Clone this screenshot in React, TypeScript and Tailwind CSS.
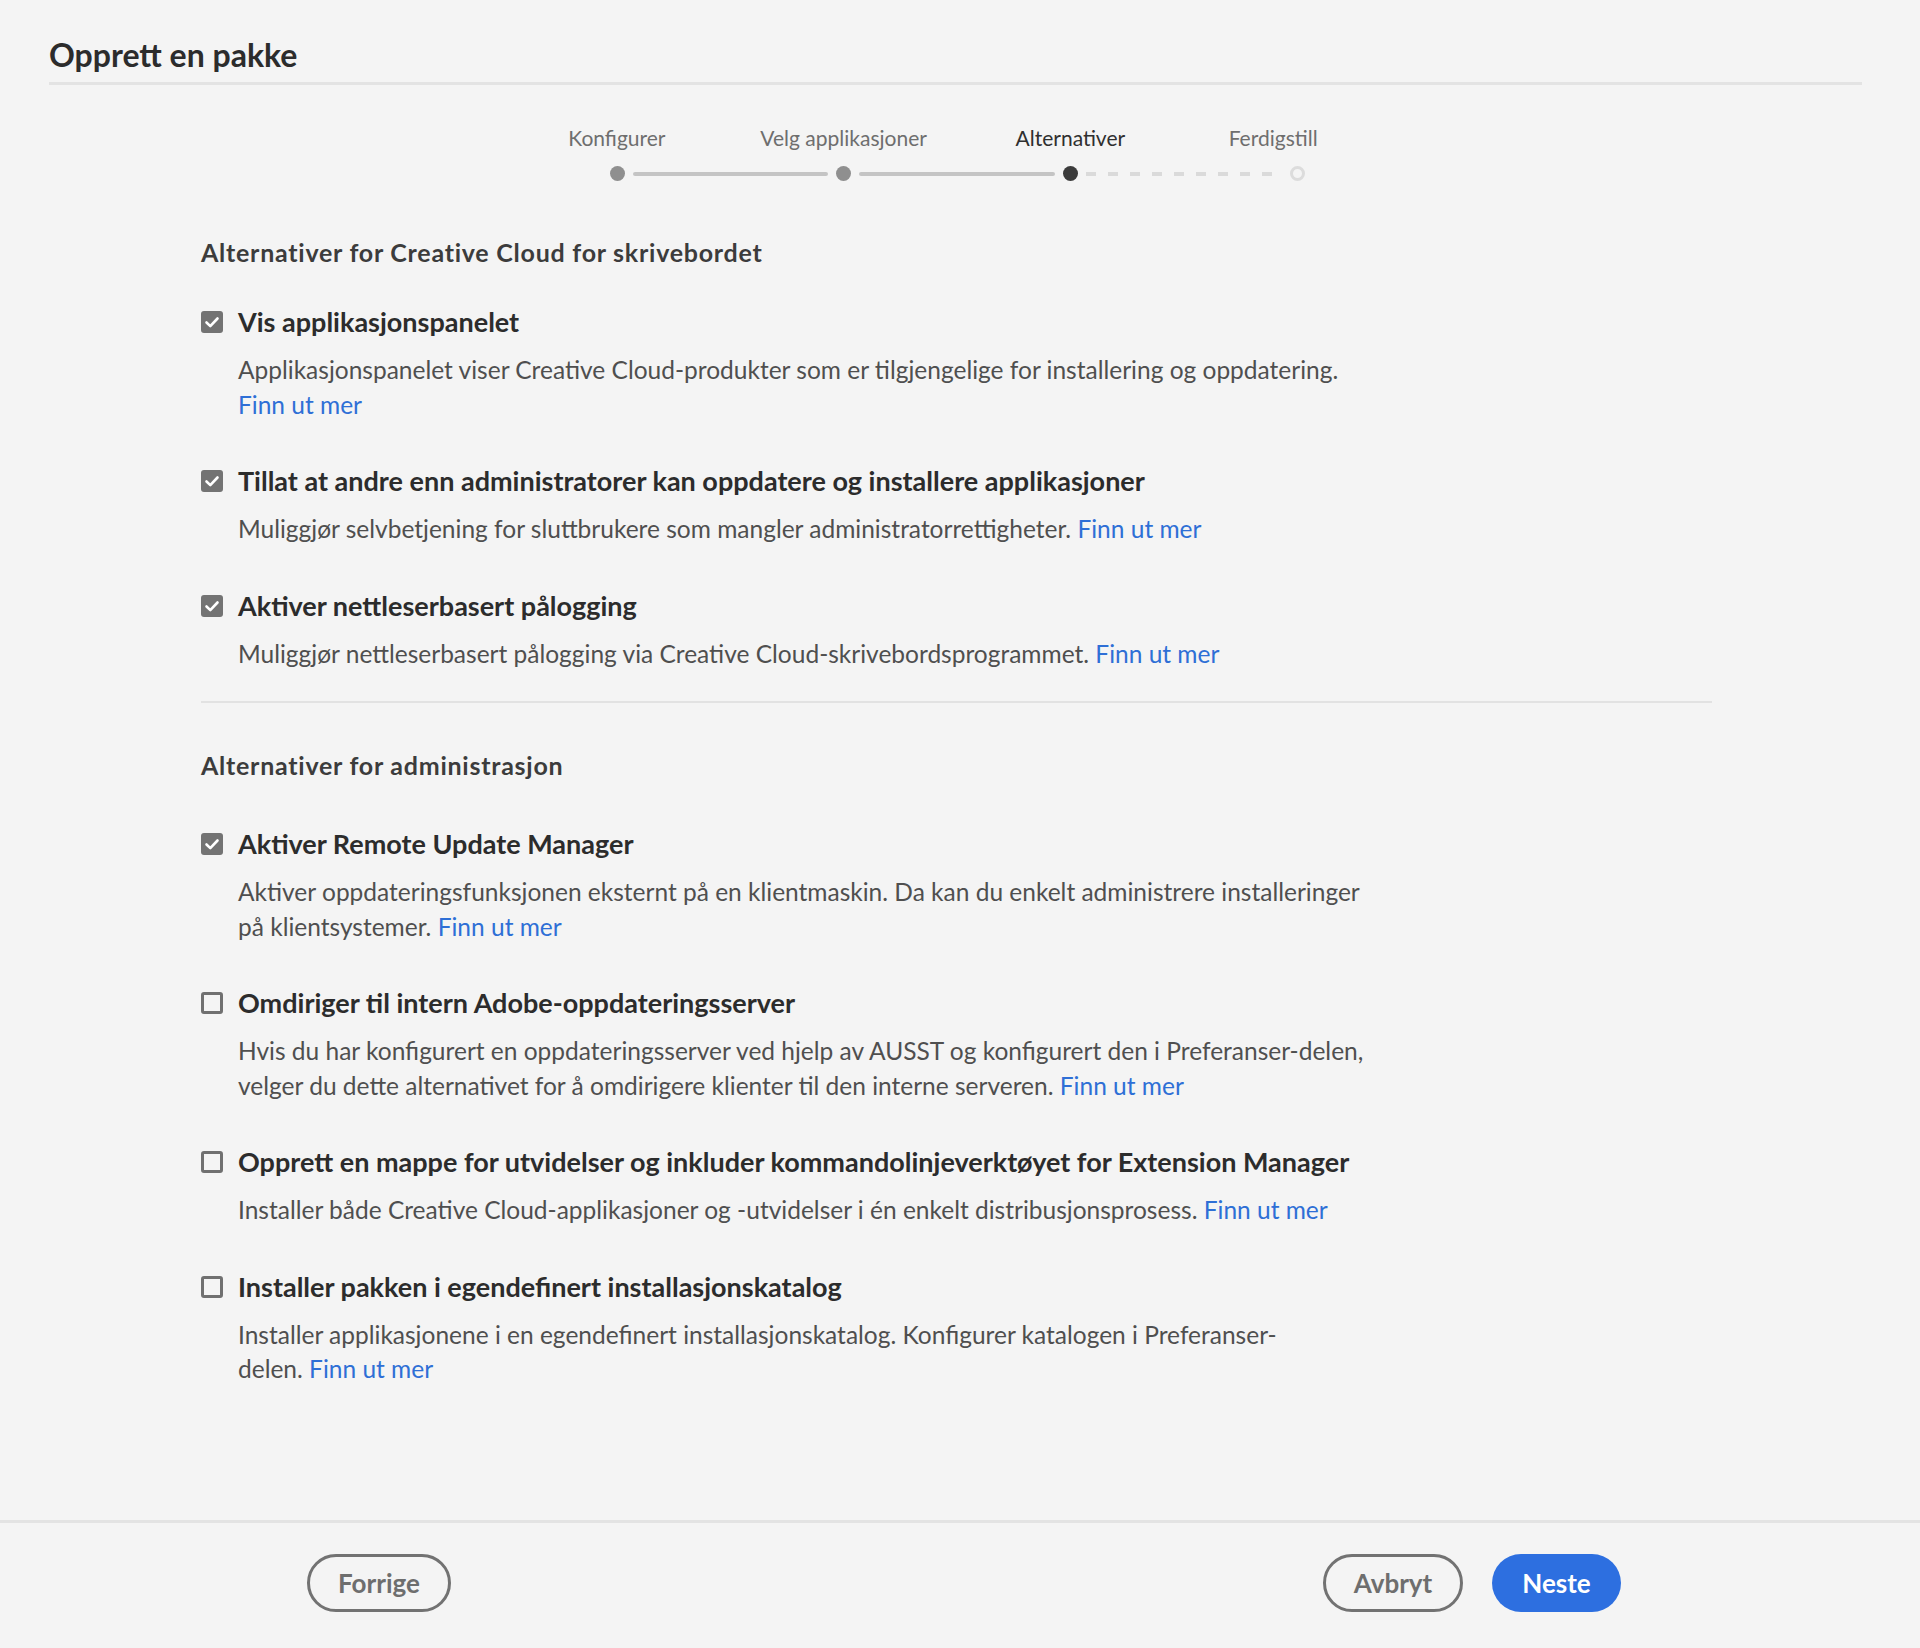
import type { ReactNode } from "react";

const LINK = "text-[#2e6fd6]";

type Opt = {
  checked: boolean;
  label: string;
  lines: ReactNode[];
};

const desktopOpts: Opt[] = [
  {
    checked: true,
    label: "Vis applikasjonspanelet",
    lines: [
      "Applikasjonspanelet viser Creative Cloud-produkter som er tilgjengelige for installering og oppdatering.",
      <span className={LINK}>Finn ut mer</span>,
    ],
  },
  {
    checked: true,
    label: "Tillat at andre enn administratorer kan oppdatere og installere applikasjoner",
    lines: [
      <>
        Muliggjør selvbetjening for sluttbrukere som mangler administratorrettigheter.{" "}
        <span className={LINK}>Finn ut mer</span>
      </>,
    ],
  },
  {
    checked: true,
    label: "Aktiver nettleserbasert pålogging",
    lines: [
      <>
        Muliggjør nettleserbasert pålogging via Creative Cloud-skrivebordsprogrammet.{" "}
        <span className={LINK}>Finn ut mer</span>
      </>,
    ],
  },
];

const adminOpts: Opt[] = [
  {
    checked: true,
    label: "Aktiver Remote Update Manager",
    lines: [
      "Aktiver oppdateringsfunksjonen eksternt på en klientmaskin. Da kan du enkelt administrere installeringer",
      <>
        på klientsystemer. <span className={LINK}>Finn ut mer</span>
      </>,
    ],
  },
  {
    checked: false,
    label: "Omdiriger til intern Adobe-oppdateringsserver",
    lines: [
      "Hvis du har konfigurert en oppdateringsserver ved hjelp av AUSST og konfigurert den i Preferanser-delen,",
      <>
        velger du dette alternativet for å omdirigere klienter til den interne serveren.{" "}
        <span className={LINK}>Finn ut mer</span>
      </>,
    ],
  },
  {
    checked: false,
    label: "Opprett en mappe for utvidelser og inkluder kommandolinjeverktøyet for Extension Manager",
    lines: [
      <>
        Installer både Creative Cloud-applikasjoner og -utvidelser i én enkelt distribusjonsprosess.{" "}
        <span className={LINK}>Finn ut mer</span>
      </>,
    ],
  },
  {
    checked: false,
    label: "Installer pakken i egendefinert installasjonskatalog",
    lines: [
      "Installer applikasjonene i en egendefinert installasjonskatalog. Konfigurer katalogen i Preferanser-",
      <>
        delen. <span className={LINK}>Finn ut mer</span>
      </>,
    ],
  },
];

function Checkbox({ checked }: { checked: boolean }) {
  if (!checked) {
    return <span className="mt-[6px] block h-[22px] w-[22px] shrink-0 rounded-[3px] border-[3px] border-[#707070]" />;
  }
  return (
    <span className="mt-[6px] flex h-[22px] w-[22px] shrink-0 items-center justify-center rounded-[3px] bg-[#737373]">
      <svg viewBox="0 0 22 22" className="h-[22px] w-[22px]" fill="none">
        <path d="M5.5 11.5l3.8 3.6L16.5 7.5" stroke="#fff" strokeWidth="2.6" strokeLinecap="round" strokeLinejoin="round" />
      </svg>
    </span>
  );
}

function Option({ opt, first }: { opt: Opt; first?: boolean }) {
  return (
    <div className={`flex gap-[15px] ${first ? "" : "mt-[42px]"}`}>
      <Checkbox checked={opt.checked} />
      <div>
        <div className="whitespace-nowrap text-[27px] font-bold leading-[34px] text-[#2c2c2c]">{opt.label}</div>
        <div className="mt-[14px] text-[24.5px] leading-[34.5px] text-[#4f4f4f]">
          {opt.lines.map((l, i) => (
            <div key={i} className="whitespace-nowrap">
              {l}
            </div>
          ))}
        </div>
      </div>
    </div>
  );
}

const STEPS = ["Konfigurer", "Velg applikasjoner", "Alternativer", "Ferdigstill"];

function Stepper() {
  return (
    <div className="mt-[38px] pl-[3px]">
      <div className="mx-auto w-[907px]">
        <div className="grid grid-cols-4 text-center text-[21px] leading-[30px]">
          {STEPS.map((s, i) => (
            <span
              key={s}
              className={i === 2 ? "text-[#2f2f2f]" : i === 3 ? "-translate-x-[24px] text-[#6e6e6e]" : "text-[#6e6e6e]"}
            >
              {s}
            </span>
          ))}
        </div>
        <div className="mx-auto mt-[13px] flex w-[695px] items-center">
          <span className="h-[15px] w-[15px] shrink-0 rounded-full bg-[#8f8f8f]" />
          <span className="mx-[8px] h-[4px] flex-1 rounded-full bg-[#c4c4c4]" />
          <span className="h-[15px] w-[15px] shrink-0 rounded-full bg-[#8f8f8f]" />
          <span className="mx-[8px] h-[4px] flex-1 rounded-full bg-[#c4c4c4]" />
          <span className="h-[15px] w-[15px] shrink-0 rounded-full bg-[#3b3b3b]" />
          <span className="mx-[8px] h-[4px] flex-1 bg-[repeating-linear-gradient(90deg,#dadada_0_10px,transparent_10px_22px)]" />
          <span className="h-[15px] w-[15px] shrink-0 rounded-full border-[3px] border-[#dcdcdc]" />
        </div>
      </div>
    </div>
  );
}

export default function App() {
  return (
    <div className="flex min-h-[1648px] flex-col bg-[#f4f4f4] font-['Lato','Liberation_Sans',sans-serif]">
      <header className="pl-[49px] pr-[58px] pt-[35px]">
        <h1 className="text-[32px] font-bold leading-[40px] text-[#2c2c2c]">Opprett en pakke</h1>
        <div className="mt-[7px] h-[3px] bg-[#e3e3e3]" />
        <Stepper />
      </header>

      <main className="flex-1 pl-[201px]">
        <h2 className="mt-[54px] text-[25px] font-bold leading-[34px] tracking-[0.75px] text-[#3c3c3c]">
          Alternativer for Creative Cloud for skrivebordet
        </h2>
        <div className="mt-[36px]">
          {desktopOpts.map((o, i) => (
            <Option key={o.label} opt={o} first={i === 0} />
          ))}
        </div>

        <div className="mt-[30px] h-[2px] w-[1511px] bg-[#e2e2e2]" />

        <h2 className="mt-[45px] text-[25px] font-bold leading-[34px] tracking-[0.75px] text-[#3c3c3c]">
          Alternativer for administrasjon
        </h2>
        <div className="mt-[45px]">
          {adminOpts.map((o, i) => (
            <Option key={o.label} opt={o} first={i === 0} />
          ))}
        </div>
      </main>

      <footer className="flex items-center justify-between border-t-[3px] border-[#e3e3e3] pb-[36px] pl-[307px] pr-[299px] pt-[31px]">
        <button className="h-[58px] w-[144px] rounded-full border-[3px] border-[#727272] text-[26px] font-bold text-[#6e6e6e]">
          Forrige
        </button>
        <div className="flex gap-[29px]">
          <button className="h-[58px] w-[140px] rounded-full border-[3px] border-[#727272] text-[26px] font-bold text-[#6e6e6e]">
            Avbryt
          </button>
          <button className="h-[58px] w-[129px] rounded-full bg-[#2d6fe0] text-[26px] font-bold text-white">
            Neste
          </button>
        </div>
      </footer>
    </div>
  );
}
